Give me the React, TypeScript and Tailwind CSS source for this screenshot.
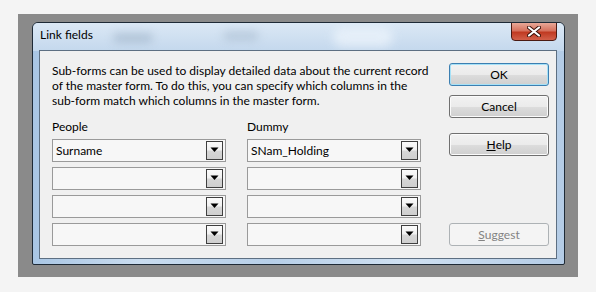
import React from "react";

const font = { fontFamily: 'Lato, "Noto Sans", Arial, sans-serif' };

function Combo({ value }: { value?: string }) {
  return (
    <div className="h-[23px] border border-[#9a9a9a] bg-[#f7f7f7] flex items-center relative">
      <span className="pl-[3px] text-[12px] text-black leading-none">{value ?? ""}</span>
      <div className="absolute right-[2px] top-[1px] bottom-[1px] w-[17px] border border-[#3f3f3f] bg-[linear-gradient(#fbfbfb_0%,#f1f1f1_45%,#d6d6d6_55%,#cfcfcf_100%)] flex items-center justify-center">
        <svg width="9" height="6" viewBox="0 0 9 6" className="mb-[1px]">
          <path d="M0.5 0.5 H8.5 L4.5 5 Z" fill="#000" />
        </svg>
      </div>
    </div>
  );
}

function Btn({
  children,
  primary,
  disabled,
}: {
  children: React.ReactNode;
  primary?: boolean;
  disabled?: boolean;
}) {
  const base =
    "h-[23px] w-[100px] rounded-[3px] flex items-center justify-center text-[12px] leading-none";
  if (disabled)
    return (
      <div className={base + " border border-[#adb2b5] bg-[#f4f4f4] text-[#838383]"}>{children}</div>
    );
  return (
    <div
      className={
        base +
        (primary
          ? " border border-[#3c7fb1] shadow-[inset_0_0_0_1px_#a6e1f7] "
          : " border border-[#707070] shadow-[inset_0_0_0_1px_#fbfbfb] ") +
        " bg-[linear-gradient(#f2f2f2_0%,#ebebeb_50%,#dddddd_51%,#cfcfcf_100%)] text-black"
      }
    >
      {children}
    </div>
  );
}

export default function App() {
  return (
    <div className="w-[596px] h-[292px] bg-[#f4f4f4] relative" style={font}>
      <div className="absolute left-[18px] top-[14px] w-[560px] h-[263px] bg-[#8a8a8a] pt-[8px] pl-[14px]">
        <div className="w-[533px] h-[243px] border border-[#1e2a36] rounded-t-[6px] rounded-b-[2px] bg-[linear-gradient(90deg,#a9c6e4_0%,#c9dcef_20%,#b7cfe8_45%,#cfe0f1_70%,#b4cce6_100%)] flex flex-col relative overflow-hidden">
          <div className="absolute inset-x-0 top-0 h-[28px] bg-[linear-gradient(#dbe8f5,#c4d8ed)]" />
          <div className="absolute left-[80px] top-[10px] w-[40px] h-[10px] rounded-full bg-[#9fb3c8] blur-[4px] opacity-60" />
          <div className="absolute left-[190px] top-[8px] w-[36px] h-[10px] rounded-full bg-[#a4b7cb] blur-[4px] opacity-50" />
          <div className="absolute left-[300px] top-[4px] w-[60px] h-[20px] rounded-full bg-[#eef5fc] blur-[5px] opacity-70" />
          <div className="relative h-[27px] flex items-start">
            <span className="pl-[7px] pt-[6px] text-[12px] text-black leading-none">Link fields</span>
            <div className="absolute right-[7px] top-[-1px] w-[46px] h-[19px] rounded-b-[4px] border border-[#4a1a12] bg-[linear-gradient(#e8a898_0%,#d6725e_45%,#c03a22_55%,#d2604a_100%)] flex items-center justify-center">
              <svg width="14" height="11" viewBox="0 0 14 11">
                <path d="M2 1.5 L12 9.5 M12 1.5 L2 9.5" stroke="#3a1008" strokeWidth="4" strokeLinecap="round" />
                <path d="M2 1.5 L12 9.5 M12 1.5 L2 9.5" stroke="#ffffff" strokeWidth="2.2" strokeLinecap="round" />
              </svg>
            </div>
          </div>
          <div className="relative ml-[6px] mr-[7px] h-[209px] border border-[#5d6f82] bg-[#f0f0f0] flex pl-[12px] pt-[12px] pb-[12px] pr-[7px]">
            <div className="w-[369px] flex flex-col">
              <p className="text-[12px] leading-[15px] text-black whitespace-nowrap">
                Sub-forms can be used to display detailed data about the current record
                <br />
                of the master form. To do this, you can specify which columns in the
                <br />
                sub-form match which columns in the master form.
              </p>
              <div className="mt-[11px] grid grid-cols-[174px_174px] gap-x-[21px] gap-y-[5px]">
                <div className="text-[12px] leading-[15px] text-black">People</div>
                <div className="text-[12px] leading-[15px] text-black">Dummy</div>
                <Combo value="Surname" />
                <Combo value="SNam_Holding" />
                <Combo />
                <Combo />
                <Combo />
                <Combo />
                <Combo />
                <Combo />
              </div>
            </div>
            <div className="ml-[28px] flex flex-col">
              <Btn primary>OK</Btn>
              <div className="mt-[9px]">
                <Btn>Cancel</Btn>
              </div>
              <div className="mt-[15px]">
                <Btn>
                  <span className="underline">H</span>elp
                </Btn>
              </div>
              <div className="mt-auto">
                <Btn disabled>
                  <span className="underline">S</span>uggest
                </Btn>
              </div>
            </div>
          </div>
        </div>
      </div>
    </div>
  );
}
